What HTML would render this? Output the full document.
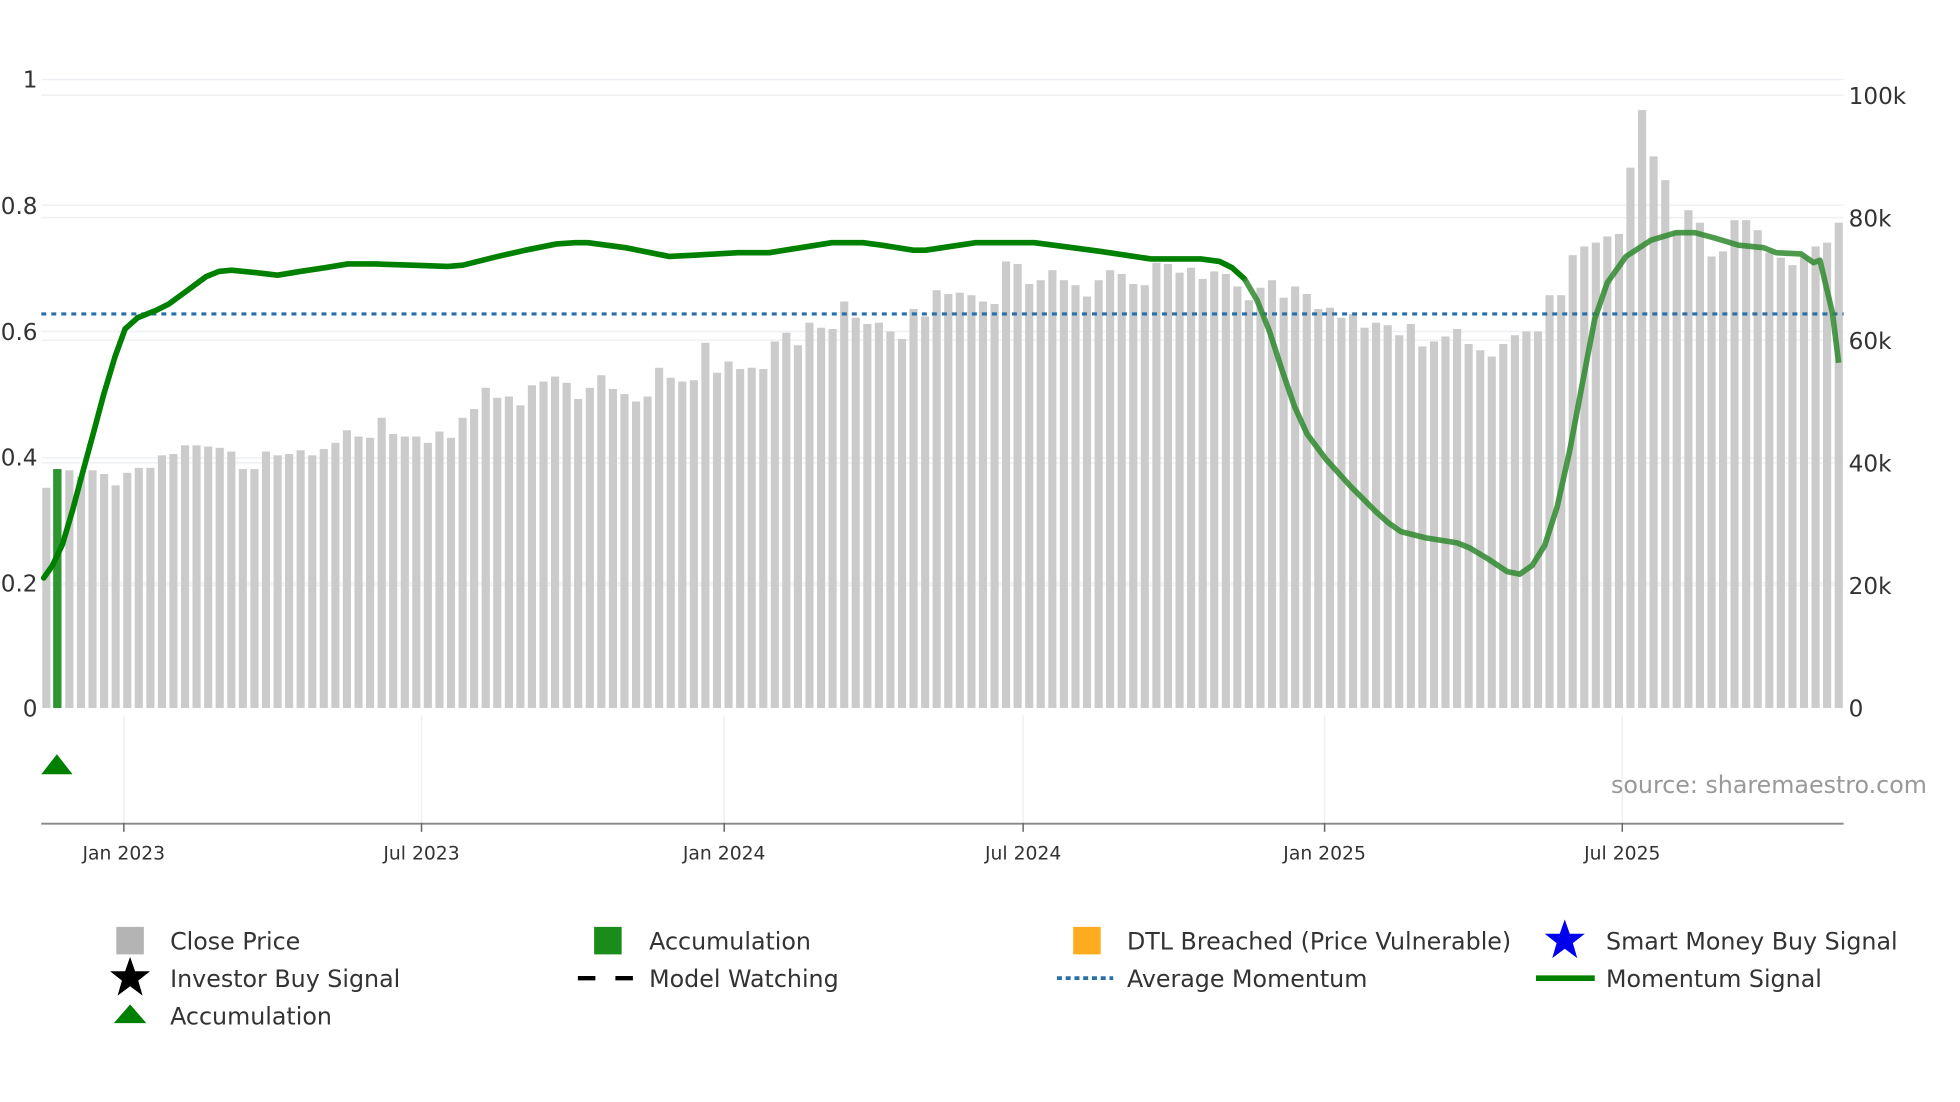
<!DOCTYPE html>
<html><head><meta charset="utf-8"><style>
html,body{margin:0;padding:0;background:#fff;}
svg{display:block;}
text{font-family:"DejaVu Sans","Liberation Sans",sans-serif;}
.ax{font-size:18.5px;fill:#333;}
.tk{font-size:15px;fill:#333;}
.lg{font-family:"DejaVu Sans",sans-serif;font-size:19px;fill:#333;}
</style></head><body>
<svg id="s" width="1960" height="1102" viewBox="0 0 1567 881" xmlns="http://www.w3.org/2000/svg">
<g stroke="#eef0f3" stroke-width="1.2">
<line x1="33" x2="1474" y1="63.5" y2="63.5"/><line x1="33" x2="1474" y1="76" y2="76"/>
<line x1="33" x2="1474" y1="164" y2="164"/><line x1="33" x2="1474" y1="174" y2="174"/>
<line x1="33" x2="1474" y1="265" y2="265"/><line x1="33" x2="1474" y1="272" y2="272"/>
<line x1="33" x2="1474" y1="366" y2="366"/><line x1="33" x2="1474" y1="370" y2="370"/>
<line x1="33" x2="1474" y1="466" y2="466"/><line x1="33" x2="1474" y1="468" y2="468"/>
<line x1="99" x2="99" y1="572" y2="658"/><line x1="337" x2="337" y1="572" y2="658"/>
<line x1="579" x2="579" y1="572" y2="658"/><line x1="818" x2="818" y1="572" y2="658"/>
<line x1="1059" x2="1059" y1="572" y2="658"/><line x1="1297" x2="1297" y1="572" y2="658"/>
</g>
<g id="bars" fill="#cbcbcb"></g>
<rect x="42.5" y="375" width="6.5" height="191" fill="#2e962e"/>
<line x1="33" x2="1474" y1="251" y2="251" stroke="#2a6fa8" stroke-width="2.5" stroke-dasharray="4,4"/>
<polyline id="m1" fill="none" stroke="#008000" stroke-width="4.5" stroke-linejoin="round" stroke-linecap="round"/>
<polyline id="m2" fill="none" stroke="#2f8a2f" stroke-opacity="0.85" stroke-width="4.5" stroke-linejoin="round"/>
<g class="ax" text-anchor="end">
<text x="30" y="70">1</text><text x="30" y="171">0.8</text><text x="30" y="272">0.6</text>
<text x="30" y="372">0.4</text><text x="30" y="473">0.2</text><text x="30" y="573">0</text>
</g>
<g class="ax">
<text x="1478" y="83">100k</text><text x="1478" y="181">80k</text><text x="1478" y="279">60k</text>
<text x="1478" y="377">40k</text><text x="1478" y="475">20k</text><text x="1478" y="573">0</text>
</g>
<line x1="33" x2="1474" y1="658.5" y2="658.5" stroke="#888" stroke-width="1.5"/>
<g stroke="#666" stroke-width="1.2">
<line x1="99" x2="99" y1="658" y2="665"/><line x1="337" x2="337" y1="658" y2="665"/>
<line x1="579" x2="579" y1="658" y2="665"/><line x1="818" x2="818" y1="658" y2="665"/>
<line x1="1059" x2="1059" y1="658" y2="665"/><line x1="1297" x2="1297" y1="658" y2="665"/>
</g>
<g class="tk" text-anchor="middle">
<text x="99" y="687">Jan 2023</text><text x="337" y="687">Jul 2023</text><text x="579" y="687">Jan 2024</text>
<text x="818" y="687">Jul 2024</text><text x="1059" y="687">Jan 2025</text><text x="1297" y="687">Jul 2025</text>
</g>
<polygon points="33,619 58,619 45.5,603" fill="#008000"/>
<text x="1288" y="634" style="font-size:19px;fill:#999">source: sharemaestro.com</text>
<rect x="93" y="741" width="22" height="22" fill="#b4b4b4"/>
<text class="lg" x="136" y="759">Close Price</text>
<rect x="475" y="741" width="22" height="22" fill="#1a8c1a"/>
<text class="lg" x="519" y="759">Accumulation</text>
<rect x="858" y="741" width="22" height="22" fill="#ffab1f"/>
<text class="lg" x="901" y="759">DTL Breached (Price Vulnerable)</text>
<polygon fill="#0000ee" transform="translate(1251,752)" points="0,-17 4,-5.5 16,-5.5 6.5,2 10,14 0,6.5 -10,14 -6.5,2 -16,-5.5 -4,-5.5"/>
<text class="lg" x="1284" y="759">Smart Money Buy Signal</text>
<polygon fill="#000" transform="translate(104,782)" points="0,-17 4,-5.5 16,-5.5 6.5,2 10,14 0,6.5 -10,14 -6.5,2 -16,-5.5 -4,-5.5"/>
<text class="lg" x="136" y="789">Investor Buy Signal</text>
<line x1="462" x2="506" y1="782" y2="782" stroke="#000" stroke-width="3.5" stroke-dasharray="14,16"/>
<text class="lg" x="519" y="789">Model Watching</text>
<line x1="845" x2="890" y1="782" y2="782" stroke="#2a6fa8" stroke-width="3" stroke-dasharray="4,3"/>
<text class="lg" x="901" y="789">Average Momentum</text>
<line x1="1228" x2="1275" y1="782" y2="782" stroke="#008000" stroke-width="4.5"/>
<text class="lg" x="1284" y="789">Momentum Signal</text>
<polygon points="91,818 117,818 104,803" fill="#008000"/>
<text class="lg" x="136" y="819">Accumulation</text>
</svg>
<script>
var tops=[390,375,376,381,376,379,388,378,374,374,364,363,356,356,357,358,361,375,375,361,364,363,360,364,359,354,344,349,350,334,347,349,349,354,345,350,334,327,310,318,317,324,308,305,301,306,319,310,300,311,315,321,317,294,302,305,304,274,298,289,295,294,295,273,266,276,258,262,263,241,254,259,258,265,271,247,253,232,235,234,236,241,243,209,211,227,224,216,224,228,237,224,216,219,227,228,210,211,218,214,223,217,219,229,240,230,224,238,229,235,247,246,254,251,262,258,260,268,259,277,273,269,263,275,280,285,275,268,265,265,236,236,204,197,194,189,187,134,88,125,144,185,168,178,205,201,176,176,184,202,206,212,205,197,194,178];
var n=tops.length,x0=37,x1=1470,g=document.getElementById('bars'),h='';
for(var i=0;i<n;i++){var x=x0+(x1-x0)*i/(n-1);h+='<rect x="'+(x-3.25).toFixed(1)+'" y="'+tops[i]+'" width="6.5" height="'+(566-tops[i])+'"/>';}
g.innerHTML=h;
var p1="35,462 42,452 50,435 58,408 66,378 75,345 83,315 92,285 100,263 110,254 125,248 135,243 150,232 165,221 175,217 185,216 205,218 222,220 240,217 260,214 278,211 300,211 330,212 358,213 370,212 398,205 420,200 445,195 460,194 470,194 500,198 525,203 535,205 555,204 590,202 615,202 640,198 665,194 690,194 705,196 730,200 740,200 780,194 827,194 850,197 880,201 920,207 960,207 975,209 985,214 995,223";
var p2="995,223 1005,240 1015,265 1025,296 1035,325 1045,347 1060,367 1080,389 1100,409 1110,418 1120,425 1140,430 1165,434 1175,438 1190,447 1205,457 1215,459 1225,452 1235,436 1245,405 1255,360 1265,307 1275,255 1285,226 1300,205 1320,192 1340,186 1355,186 1370,190 1390,196 1410,198 1420,202 1440,203 1450,210 1455,208 1465,250 1470,290";
document.getElementById('m1').setAttribute('points',p1);
document.getElementById('m2').setAttribute('points',p2);
</script>
</body></html>
